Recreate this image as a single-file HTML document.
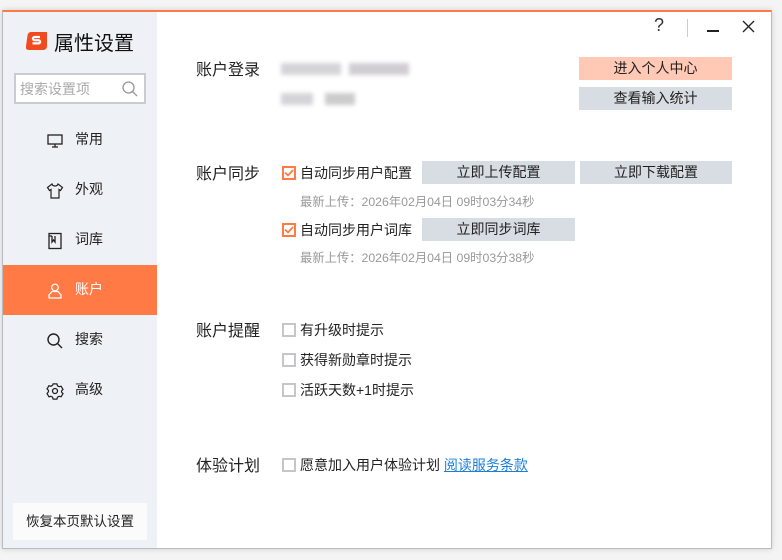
<!DOCTYPE html>
<html><head><meta charset="utf-8"><style>
*{margin:0;padding:0;box-sizing:border-box}
body{width:782px;height:560px;background:#f4f4f4;position:relative;overflow:hidden;font-family:"Liberation Sans","Noto Sans CJK SC",sans-serif;color:#222}
.win{position:absolute;left:2px;top:10px;width:770px;height:539px;background:#fff;border:1px solid #b8bcc2;border-top:2px solid #ff7a45;box-shadow:0 0 6px rgba(0,0,0,.15)}
.side{position:absolute;left:0;top:0;width:154px;height:100%;background:#eef1f6}
.a{position:absolute;white-space:nowrap}
.nav{position:absolute;left:0;width:154px;height:50px;font-size:14px}
.nav svg{position:absolute;left:43px;top:17px}
.nav span{position:absolute;left:72px;top:14px}
.btn{position:absolute;height:23px;background:#d8dce3;font-size:14px;text-align:center;line-height:23px;color:#222}
.lbl{font-size:16px}
.cb{position:absolute;width:14px;height:14px;border:2px solid #c4c6ca;background:#fff}
.cb.on{border-color:#ff7a45}
.t13{font-size:14px}
.gray{font-size:12.3px;color:#999}
</style></head><body>
<div class="win">
<div class="side">
 <svg class="a" style="left:23px;top:20px" width="21" height="18" viewBox="0 0 21 18"><rect x="0" y="0" width="21" height="18" rx="3" fill="#f04a1f" transform="skewX(-8) translate(2,0)"/><path d="M14 5H8.5a1.6 1.6 0 0 0 0 3.2h4a1.6 1.6 0 0 1 0 3.2H6.5" stroke="#fff" stroke-width="2.2" fill="none"/></svg>
 <div class="a" style="left:51px;top:15px;font-size:20px;color:#111">属性设置</div>
 <div class="a" style="left:11px;top:61px;width:132px;height:31px;border:2px solid #c8cbd0;background:#fff"></div>
 <div class="a" style="left:17px;top:67px;font-size:14px;color:#aaa">搜索设置项</div>
 <svg class="a" style="left:118px;top:68px" width="18" height="18" viewBox="0 0 18 18"><circle cx="7.5" cy="7.5" r="5.5" stroke="#999" stroke-width="1.3" fill="none"/><path d="M11.5 11.5L16 16" stroke="#999" stroke-width="1.3"/></svg>
 <div class="nav" style="top:103px"><svg width="18" height="18" viewBox="0 0 18 18" fill="none" stroke="#222" stroke-width="1.3"><rect x="2" y="3" width="14" height="9"/><path d="M9 12v3M6 15h6"/></svg><span>常用</span></div>
 <div class="nav" style="top:153px"><svg width="18" height="18" viewBox="0 0 18 18" fill="none" stroke="#222" stroke-width="1.2"><path d="M6 2L1.5 5.5l2 3L5 7.5V16h8V7.5l1.5 1l2-3L12 2c-.5 1.5-1.5 2-3 2S6.5 3.5 6 2z"/></svg><span>外观</span></div>
 <div class="nav" style="top:203px"><svg width="18" height="18" viewBox="0 0 18 18" fill="none" stroke="#222" stroke-width="1.3"><rect x="3" y="1.5" width="12" height="15"/><path d="M6 4v6l1.5-2 1.5 2V4M3 4h3"/></svg><span>词库</span></div>
 <div class="nav" style="top:253px;background:#ff7a45;color:#fff"><svg width="18" height="18" viewBox="0 0 18 18" fill="none" stroke="#fff" stroke-width="1.2"><circle cx="9" cy="5.5" r="3.3"/><path d="M3 16v-3l3-3.5h6l3 3.5v3z"/></svg><span>账户</span></div>
 <div class="nav" style="top:303px"><svg width="18" height="18" viewBox="0 0 18 18" fill="none" stroke="#222" stroke-width="1.4"><circle cx="7.5" cy="7.5" r="5.5"/><path d="M11.5 11.5L16 16"/></svg><span>搜索</span></div>
 <div class="nav" style="top:353px"><svg width="18" height="18" viewBox="0 0 18 18" fill="none" stroke="#222" stroke-width="1.3"><path d="M7 1.5h4l.6 2 1.8 1 2-.6 2 3.4-1.5 1.5v1.4l1.5 1.5-2 3.4-2-.6-1.8 1-.6 2H7l-.6-2-1.8-1-2 .6-2-3.4L2.1 9.7V8.3L.6 6.8l2-3.4 2 .6 1.8-1z" transform="scale(.95) translate(.5,.5)"/><circle cx="9" cy="9" r="2.5"/></svg><span>高级</span></div>
 <div class="a" style="left:10px;top:491px;width:134px;height:37px;background:#fbfbfc;font-size:13.5px;text-align:center;line-height:37px">恢复本页默认设置</div>
</div>
<div class="a" style="left:651px;top:3px;font-size:18px;color:#333">?</div>
<div class="a" style="left:684px;top:7px;width:1px;height:18px;background:#ccc"></div>
<div class="a" style="left:704px;top:18px;width:12px;height:1.5px;background:#222"></div>
<svg class="a" style="left:739px;top:8px" width="13" height="13" viewBox="0 0 13 13"><path d="M1 1l11 11M12 1L1 12" stroke="#222" stroke-width="1.3"/></svg>

<div class="a lbl" style="left:193px;top:44px">账户登录</div>
<div class="a" style="left:278px;top:51px;width:60px;height:12px;background:#b8b8bc;opacity:.6;filter:blur(2px)"></div>
<div class="a" style="left:346px;top:51px;width:60px;height:12px;background:#b0acb2;opacity:.6;filter:blur(2px)"></div>
<div class="a" style="left:278px;top:81px;width:32px;height:12px;background:#b8b8bc;opacity:.6;filter:blur(2px)"></div>
<div class="a" style="left:322px;top:81px;width:30px;height:12px;background:#aaa;opacity:.6;filter:blur(2px)"></div>
<div class="btn" style="left:576px;top:45px;width:153px;background:#ffc9b5">进入个人中心</div>
<div class="btn" style="left:576px;top:75px;width:153px">查看输入统计</div>

<div class="a lbl" style="left:193px;top:148px">账户同步</div>
<div class="cb on" style="left:279px;top:154px"></div>
<svg class="a" style="left:281px;top:156px" width="10" height="10" viewBox="0 0 10 10"><path d="M1 4.5l3 3L9 2" stroke="#ff7a45" stroke-width="1.8" fill="none"/></svg>
<div class="a t13" style="left:297px;top:151px">自动同步用户配置</div>
<div class="btn" style="left:419px;top:149px;width:153px">立即上传配置</div>
<div class="btn" style="left:577px;top:149px;width:152px">立即下载配置</div>
<div class="a gray" style="left:297px;top:180px">最新上传：2026年02月04日 09时03分34秒</div>
<div class="cb on" style="left:279px;top:211px"></div>
<svg class="a" style="left:281px;top:213px" width="10" height="10" viewBox="0 0 10 10"><path d="M1 4.5l3 3L9 2" stroke="#ff7a45" stroke-width="1.8" fill="none"/></svg>
<div class="a t13" style="left:297px;top:208px">自动同步用户词库</div>
<div class="btn" style="left:419px;top:206px;width:153px">立即同步词库</div>
<div class="a gray" style="left:297px;top:236px">最新上传：2026年02月04日 09时03分38秒</div>

<div class="a lbl" style="left:193px;top:305px">账户提醒</div>
<div class="cb" style="left:279px;top:311px"></div><div class="a t13" style="left:297px;top:308px">有升级时提示</div>
<div class="cb" style="left:279px;top:341px"></div><div class="a t13" style="left:297px;top:338px">获得新勋章时提示</div>
<div class="cb" style="left:279px;top:371px"></div><div class="a t13" style="left:297px;top:368px">活跃天数+1时提示</div>

<div class="a lbl" style="left:193px;top:440px">体验计划</div>
<div class="cb" style="left:279px;top:446px"></div><div class="a t13" style="left:297px;top:443px">愿意加入用户体验计划 <span style="color:#1a7fd9;text-decoration:underline">阅读服务条款</span></div>
</div>
</body></html>
